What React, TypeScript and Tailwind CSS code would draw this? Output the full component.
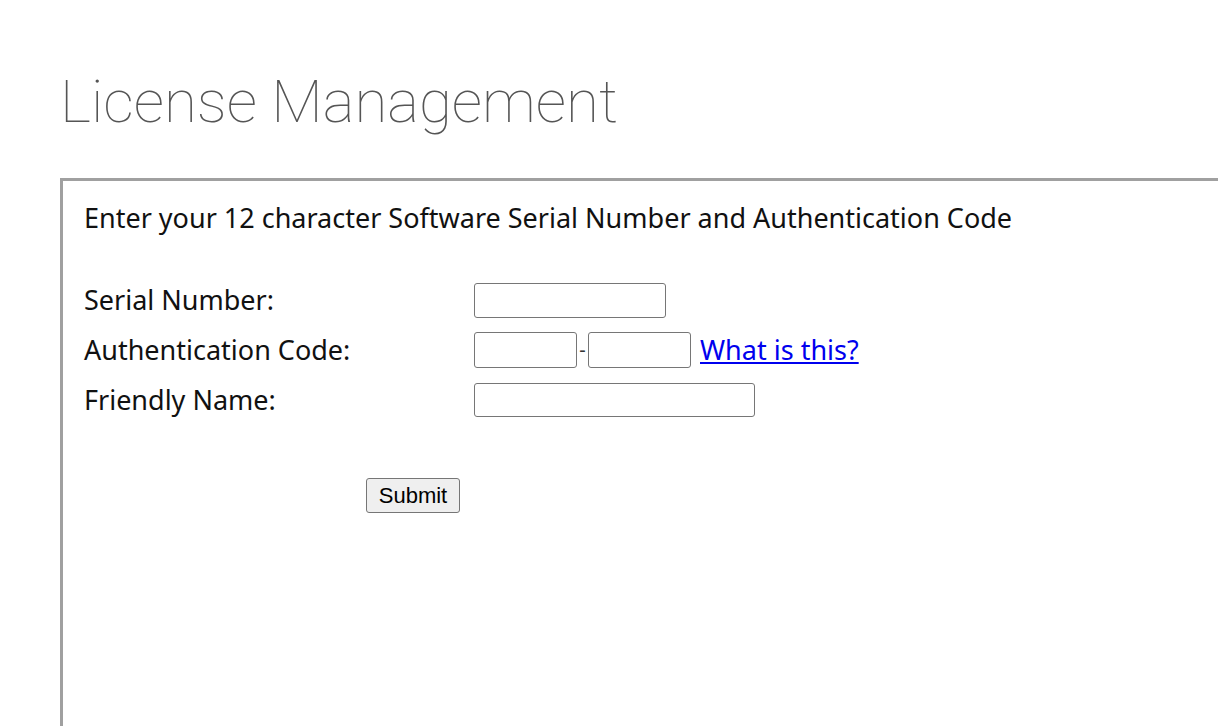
import React from "react";

export default function App() {
  const body = { fontFamily: '"Noto Sans", "Open Sans", sans-serif' };
  return (
    <div className="w-[1218px] h-[726px] overflow-hidden bg-white relative">
      <h1
        className="ml-[60px] pt-[62px] text-[60px] leading-[80px] font-thin text-[#555]"
        style={{ fontFamily: 'Roboto, sans-serif' }}
      >
        License Management
      </h1>
      <div
        className="ml-[60px] mt-[36px] w-[1300px] h-[700px] border-[3px] border-[#a0a0a0] pl-[21px] pt-[17px] text-[#111]"
        style={body}
      >
        <p className="text-[27px] leading-[40px]">
          Enter your 12 character Software Serial Number and Authentication Code
        </p>
        <div className="mt-[44px] flex flex-col gap-[14px]">
          <div className="flex items-center h-[36px]">
            <span className="w-[390px] text-[27px]">Serial Number:</span>
            <input className="w-[192px] h-[35px] border-[1.5px] border-[#767676] rounded-[3px] bg-white" />
          </div>
          <div className="flex items-center h-[36px]">
            <span className="w-[390px] text-[27px]">Authentication Code:</span>
            <input className="w-[103px] h-[36px] border-[1.5px] border-[#767676] rounded-[3px] bg-white" />
            <span className="w-[11px] text-center text-[20px] text-[#333]">-</span>
            <input className="w-[103px] h-[36px] border-[1.5px] border-[#767676] rounded-[3px] bg-white" />
            <a href="#" className="ml-[9px] text-[27px] text-[#0000ee] underline">
              What is this?
            </a>
          </div>
          <div className="flex items-center h-[36px]">
            <span className="w-[390px] text-[27px]">Friendly Name:</span>
            <input className="w-[281px] h-[34px] border-[1.5px] border-[#767676] rounded-[3px] bg-white" />
          </div>
        </div>
        <div className="mt-[60px] ml-[282px]">
          <button
            className="w-[94px] h-[35px] border-[1.5px] border-[#767676] rounded-[3px] bg-[#efefef] text-[22px] leading-[30px] text-black"
            style={{ fontFamily: '"Liberation Sans", Arial, sans-serif' }}
          >
            Submit
          </button>
        </div>
      </div>
    </div>
  );
}
